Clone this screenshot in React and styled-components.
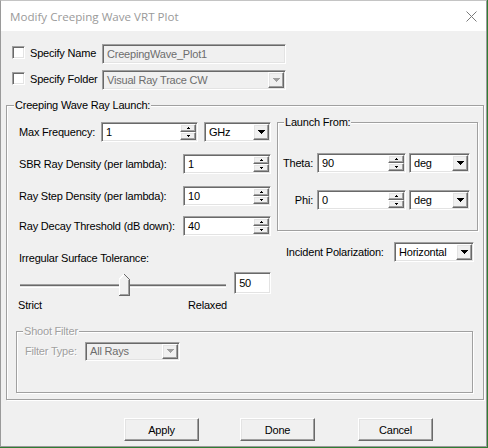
import React from 'react';
import styled, { createGlobalStyle, css } from 'styled-components';

const Global = createGlobalStyle`
  html, body { margin: 0; padding: 0; background: #2f7d32; }
  body { width: 488px; height: 448px; overflow: hidden; }
  * { box-sizing: border-box; }
`;

const sunken = css`
  border: 1px solid;
  border-color: #a0a0a0 #ffffff #ffffff #a0a0a0;
  box-shadow: inset 1px 1px 0 #696969, inset -1px -1px 0 #e3e3e3;
`;

const raised = css`
  border: 1px solid;
  border-color: #ffffff #696969 #696969 #ffffff;
  box-shadow: inset -1px -1px 0 #a0a0a0, inset 1px 1px 0 #e3e3e3;
  background: #f0f0f0;
`;

const etched = css`
  border: 1px solid #a0a0a0;
  box-shadow: inset 1px 1px 0 #ffffff, 1px 1px 0 #ffffff;
`;

const Window = styled.div`
  width: 487px;
  height: 447px;
  background: #f0f0f0;
  border: 1px solid #9a9a9a;
  border-top-color: #c4c4c4;
  display: flex;
  flex-direction: column;
  font-family: "Liberation Sans", Arial, sans-serif;
  font-size: 11px;
  letter-spacing: -0.2px;
  color: #000;
`;

const TitleBar = styled.div`
  height: 30px;
  flex: none;
  background: #ffffff;
  display: flex;
  align-items: center;
  justify-content: space-between;
  padding: 0 9px 0 9px;
`;

const TitleText = styled.span`
  font-family: "Segoe UI", "Open Sans", "Noto Sans", sans-serif;
  font-size: 11.6px;
  letter-spacing: 0;
  color: #9a9a9a;
`;

const Body = styled.div`
  flex: 1;
  display: flex;
  flex-direction: column;
  padding: 13px 1px 0 5px;
`;

const CheckRow = styled.div`
  display: flex;
  align-items: flex-start;
  height: 20px;
  margin-top: ${(p) => p.$mt || 0}px;
`;

const CheckBox = styled.span`
  ${sunken};
  width: 13px;
  height: 13px;
  background: #ffffff;
  margin: 2px 5px 0 6px;
  flex: none;
`;

const CheckLabel = styled.span`
  width: 72px;
  line-height: 18px;
  white-space: nowrap;
`;

const Field = styled.div`
  ${sunken};
  width: ${(p) => p.$w}px;
  height: ${(p) => p.$h || 20}px;
  margin-left: ${(p) => p.$ml || 0}px;
  background: ${(p) => (p.$disabled ? '#f0f0f0' : '#ffffff')};
  color: ${(p) => (p.$disabled ? '#6d6d6d' : '#000000')};
  display: flex;
  align-items: stretch;
  padding: 1px;
  flex: none;
`;

const FieldText = styled.span`
  flex: 1;
  padding-left: 3px;
  display: flex;
  align-items: center;
  overflow: hidden;
  white-space: nowrap;
`;

const DropBtn = styled.span`
  ${raised};
  width: 16px;
  flex: none;
  display: flex;
  align-items: center;
  justify-content: center;
`;

const SpinBox = styled.span`
  width: 16px;
  flex: none;
  display: flex;
  flex-direction: column;
`;

const SpinBtn = styled.span`
  ${raised};
  flex: 1;
  display: flex;
  align-items: center;
  justify-content: center;
`;

const Group = styled.div`
  ${etched};
  width: ${(p) => p.$w}px;
  height: ${(p) => p.$h}px;
  margin: ${(p) => p.$m || '0'};
  display: flex;
  flex-direction: column;
  flex: none;
`;

const Legend = styled.div`
  align-self: flex-start;
  margin: -7px 0 0 ${(p) => p.$ml}px;
  padding: 0 1px;
  line-height: 13px;
  background: #f0f0f0;
  white-space: nowrap;
  color: ${(p) => (p.$disabled ? '#a0a0a0' : '#000')};
  text-shadow: ${(p) => (p.$disabled ? '1px 1px 0 #ffffff' : 'none')};
`;

const TopGrid = styled.div`
  display: grid;
  grid-template-columns: 253px 201px;
  column-gap: 5px;
  padding-left: 12px;
  margin-top: 10px;
  align-items: start;
`;

const LeftCol = styled.div`
  display: flex;
  flex-direction: column;
  padding-right: 1px;
`;

const RightCol = styled.div`
  display: flex;
  flex-direction: column;
`;

const FormRow = styled.div`
  display: flex;
  align-items: center;
  height: 20px;
  margin-top: ${(p) => p.$mt || 0}px;
  padding: ${(p) => p.$pad || '0'};
  justify-content: ${(p) => p.$justify || 'flex-start'};
`;

const Label = styled.span`
  flex: ${(p) => (p.$grow ? 1 : 'none')};
  white-space: nowrap;
`;

const LabelCell = styled.span`
  width: ${(p) => p.$w}px;
  margin-right: ${(p) => p.$gap || 0}px;
  text-align: ${(p) => p.$align || 'left'};
  white-space: nowrap;
  flex: none;
  color: ${(p) => (p.$disabled ? '#a0a0a0' : '#000')};
  text-shadow: ${(p) => (p.$disabled ? '1px 1px 0 #ffffff' : 'none')};
`;

const SectionLabel = styled.div`
  line-height: 13px;
  margin-top: ${(p) => p.$mt || 0}px;
  white-space: nowrap;
`;

const SliderRow = styled.div`
  display: flex;
  align-items: flex-start;
  margin-top: 7px;
`;

const Slider = styled.div`
  position: relative;
  width: 207px;
  height: 23px;
  margin-left: 1px;
  display: flex;
  flex-direction: column;
`;

const Track = styled.div`
  margin-top: 12px;
  height: 4px;
  border-top: 1px solid #a0a0a0;
  border-bottom: 1px solid #ffffff;
  background: #e3e3e3;
  box-shadow: inset 0 1px 0 #696969;
`;

const Thumb = styled.svg`
  position: absolute;
  top: 2px;
`;

const ValueBox = styled.div`
  ${sunken};
  width: 37px;
  height: 22px;
  margin-left: 8px;
  background: #ffffff;
  display: flex;
  align-items: center;
  padding-left: 4px;
`;

const ScaleRow = styled.div`
  width: 209px;
  margin: 4px 0 0 -1px;
  display: flex;
  justify-content: space-between;
  line-height: 13px;
`;

const ButtonRow = styled.div`
  display: flex;
  margin-top: 18px;
  padding-left: 118px;
`;

const Button = styled.button`
  ${raised};
  width: 75px;
  height: 23px;
  margin-left: ${(p) => p.$ml || 0}px;
  padding: 0;
  font: inherit;
  letter-spacing: inherit;
  color: #000;
  display: flex;
  align-items: center;
  justify-content: center;
`;

const DownArrow = ({ color = '#000' }) => (
  <svg width="7" height="4" viewBox="0 0 7 4" shapeRendering="crispEdges">
    <rect x="0" y="0" width="7" height="1" fill={color} />
    <rect x="1" y="1" width="5" height="1" fill={color} />
    <rect x="2" y="2" width="3" height="1" fill={color} />
    <rect x="3" y="3" width="1" height="1" fill={color} />
  </svg>
);

const SpinArrow = ({ up }) => (
  <svg width="3" height="2" viewBox="0 0 3 2" shapeRendering="crispEdges">
    {up ? (
      <>
        <rect x="1" y="0" width="1" height="1" fill="#000" />
        <rect x="0" y="1" width="3" height="1" fill="#000" />
      </>
    ) : (
      <>
        <rect x="0" y="0" width="3" height="1" fill="#000" />
        <rect x="1" y="1" width="1" height="1" fill="#000" />
      </>
    )}
  </svg>
);

const SpinField = ({ w, value, ml }) => (
  <Field $w={w} $ml={ml}>
    <FieldText>{value}</FieldText>
    <SpinBox>
      <SpinBtn>
        <SpinArrow up />
      </SpinBtn>
      <SpinBtn>
        <SpinArrow />
      </SpinBtn>
    </SpinBox>
  </Field>
);

const Select = ({ w, h, value, ml, disabled }) => (
  <Field $w={w} $h={h} $ml={ml} $disabled={disabled}>
    <FieldText>{value}</FieldText>
    <DropBtn>
      <DownArrow color={disabled ? '#a0a0a0' : '#000'} />
    </DropBtn>
  </Field>
);

const CloseIcon = () => (
  <svg width="11" height="11" viewBox="0 0 11 11">
    <path d="M0.5 0.5 L10.5 10.5 M10.5 0.5 L0.5 10.5" stroke="#7a7a7a" strokeWidth="1" />
  </svg>
);

const sliderValue = 50;

export default function App() {
  const thumbLeft = Math.round(((207 - 11) * sliderValue) / 100) + 1;
  return (
    <>
      <Global />
      <Window>
        <TitleBar>
          <TitleText>Modify Creeping Wave VRT Plot</TitleText>
          <CloseIcon />
        </TitleBar>
        <Body>
          <CheckRow>
            <CheckBox />
            <CheckLabel>Specify Name</CheckLabel>
            <Field $w={184} $disabled>
              <FieldText>CreepingWave_Plot1</FieldText>
            </Field>
          </CheckRow>
          <CheckRow $mt={6}>
            <CheckBox />
            <CheckLabel>Specify Folder</CheckLabel>
            <Select w={184} value="Visual Ray Trace CW" disabled />
          </CheckRow>

          <Group $w={478} $h={295} $m="15px 0 0 0">
            <Legend $ml={7}>Creeping Wave Ray Launch:</Legend>
            <TopGrid>
              <LeftCol>
                <FormRow>
                  <Label $grow>Max Frequency:</Label>
                  <SpinField w={97} value="1" />
                  <Select w={67} ml={6} value="GHz" />
                </FormRow>
                <FormRow $mt={12} $justify="space-between">
                  <Label>SBR Ray Density (per lambda):</Label>
                  <SpinField w={88} value="1" />
                </FormRow>
                <FormRow $mt={12} $justify="space-between">
                  <Label>Ray Step Density (per lambda):</Label>
                  <SpinField w={88} value="10" />
                </FormRow>
                <FormRow $mt={10} $justify="space-between">
                  <Label>Ray Decay Threshold (dB down):</Label>
                  <SpinField w={88} value="40" />
                </FormRow>
                <SectionLabel $mt={16}>Irregular Surface Tolerance:</SectionLabel>
                <SliderRow>
                  <Slider>
                    <Track />
                    <Thumb
                      width="11"
                      height="22"
                      viewBox="0 0 11 22"
                      shapeRendering="crispEdges"
                      style={{ left: thumbLeft }}
                    >
                      <polygon points="0,5 5,0 11,6 11,22 0,22" fill="#f0f0f0" />
                      <path d="M0.5 21 L0.5 5 L5 0.5" stroke="#ffffff" fill="none" />
                      <path d="M5.5 0.5 L10.5 5.5 L10.5 21.5 L0 21.5" stroke="#696969" fill="none" />
                      <path d="M9.5 6 L9.5 20.5 L1 20.5" stroke="#a0a0a0" fill="none" />
                    </Thumb>
                  </Slider>
                  <ValueBox>50</ValueBox>
                </SliderRow>
                <ScaleRow>
                  <span>Strict</span>
                  <span>Relaxed</span>
                </ScaleRow>
              </LeftCol>

              <RightCol>
                <Group $w={201} $h={109}>
                  <Legend $ml={6}>Launch From:</Legend>
                  <FormRow $mt={24} $pad="0 0 0 4px">
                    <LabelCell $w={31} $gap={4} $align="right">Theta:</LabelCell>
                    <SpinField w={89} value="90" />
                    <Select w={61} ml={3} value="deg" />
                  </FormRow>
                  <FormRow $mt={17} $pad="0 0 0 4px">
                    <LabelCell $w={31} $gap={4} $align="right">Phi:</LabelCell>
                    <SpinField w={89} value="0" />
                    <Select w={61} ml={3} value="deg" />
                  </FormRow>
                </Group>
                <FormRow $mt={11} $pad="0 4px 0 9px" $justify="space-between">
                  <Label>Incident Polarization:</Label>
                  <Select w={80} value="Horizontal" />
                </FormRow>
              </RightCol>
            </TopGrid>

            <Group $w={457} $h={62} $m="19px 0 0 9px">
              <Legend $ml={6} $disabled>Shoot Filter</Legend>
              <FormRow $mt={3} $pad="0 0 0 8px">
                <LabelCell $w={60} $disabled>Filter Type:</LabelCell>
                <Select w={95} h={19} value="All Rays" disabled />
              </FormRow>
            </Group>
          </Group>

          <ButtonRow>
            <Button>Apply</Button>
            <Button $ml={41}>Done</Button>
            <Button $ml={43}>Cancel</Button>
          </ButtonRow>
        </Body>
      </Window>
    </>
  );
}
